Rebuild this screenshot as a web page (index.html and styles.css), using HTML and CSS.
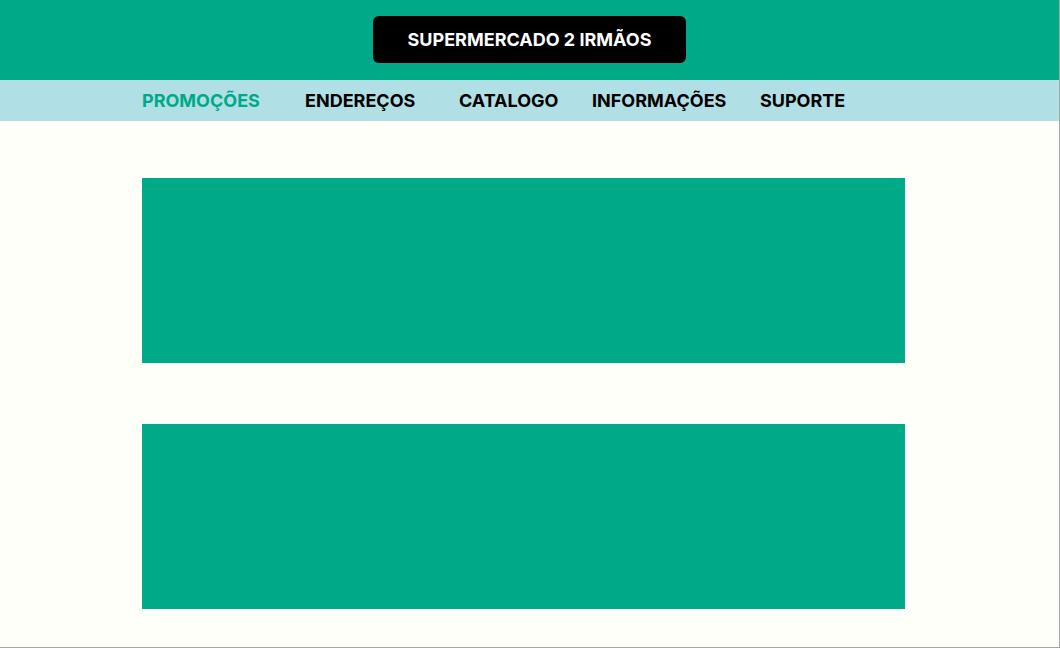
FILE: index.html
```html
<!DOCTYPE html>
<html lang="pt-BR">
<head>
<meta charset="utf-8">
<title>Supermercado 2 Irmãos</title>
<link rel="stylesheet" href="styles.css">
</head>
<body>
<div class="page">
  <header class="topbar">
    <div class="brand">SUPERMERCADO 2 IRMÃOS</div>
  </header>
  <nav class="menu">
    <ul class="menu-list">
      <li class="menu-item active">PROMOÇÕES</li>
      <li class="menu-item">ENDEREÇOS</li>
      <li class="menu-item">CATALOGO</li>
      <li class="menu-item">INFORMAÇÕES</li>
      <li class="menu-item">SUPORTE</li>
    </ul>
  </nav>
  <main class="content">
    <section class="banner"></section>
    <section class="banner"></section>
  </main>
</div>
</body>
</html>
```
FILE: styles.css
```css
* { box-sizing: border-box; }
html, body { margin: 0; padding: 0; }
body {
  font-family: Inter, "Noto Sans", sans-serif;
  background: #fffffa;
}
.page {
  width: 1060px;
  height: 648px;
  border-right: 1px solid #a6a6a6;
  border-bottom: 1px solid #a6a6a6;
  background: #fffffa;
  overflow: hidden;
}
.topbar {
  height: 80px;
  background: #00a987;
  display: flex;
  justify-content: center;
  padding-top: 16px;
}
.brand {
  width: 313px;
  height: 47px;
  background: #000;
  color: #fff;
  border-radius: 6px;
  font-weight: 700;
  font-size: 18px;
  display: flex;
  align-items: center;
  justify-content: center;
}
.menu {
  height: 41px;
  background: #b0dfe5;
  padding-left: 142px;
}
.menu-list {
  list-style: none;
  margin: 0;
  padding: 0;
  height: 100%;
  display: grid;
  grid-template-columns: 163px 154px 133px 168px auto;
  align-items: center;
}
.menu-item {
  font-weight: 700;
  font-size: 18px;
  color: #000;
  white-space: nowrap;
}
.menu-item.active { color: #00a987; }
.content {
  padding: 57px 0 0 142px;
  display: flex;
  flex-direction: column;
  gap: 61px;
}
.banner {
  width: 763px;
  height: 185px;
  background: #00a987;
}
```
